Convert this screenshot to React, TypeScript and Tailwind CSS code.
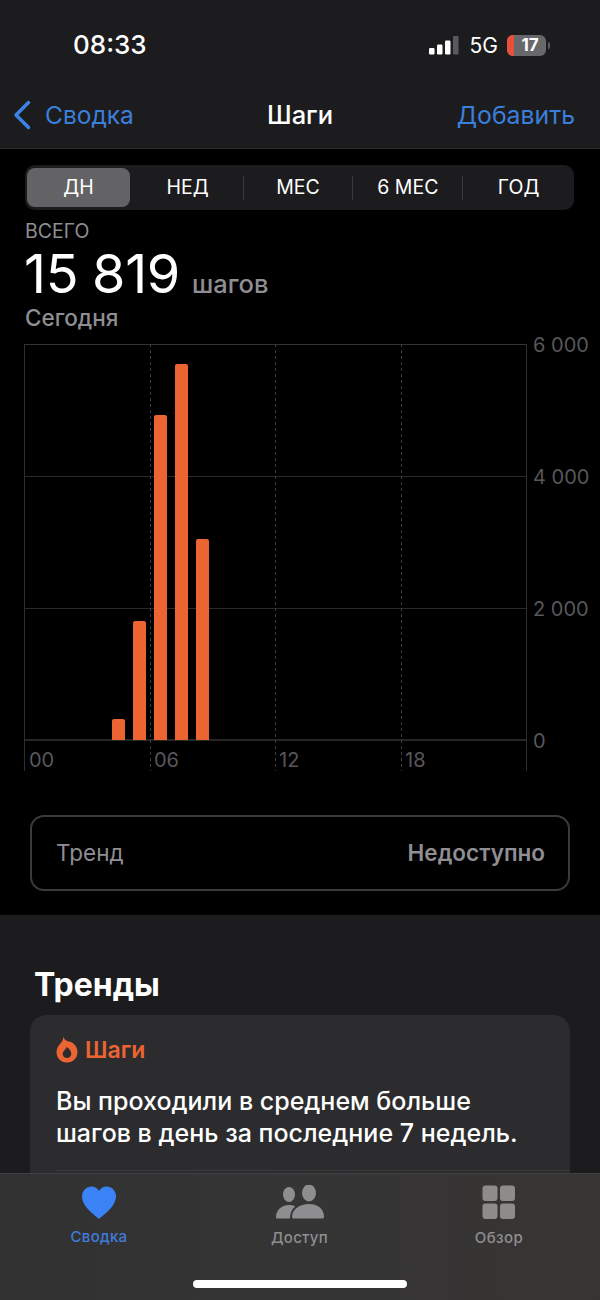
import React from 'react';

const tabs = [
  { label: 'НЕД', cls: 'w-[113px] pl-[3px]' },
  { label: 'МЕС', cls: 'w-[109px]' },
  { label: '6 МЕС', cls: 'w-[109px]' },
  { label: 'ГОД', cls: 'w-[109px] pl-[2px]' },
];

// x, top of each bar in the day chart (baseline is y=396 in chart coords)
const bars = [
  { x: 88, top: 375 },
  { x: 109, top: 277 },
  { x: 130, top: 71 },
  { x: 151, top: 20 },
  { x: 172, top: 195 },
];

const StepsChart = () => (
  <svg width="600" height="438" viewBox="0 -10 600 438" className="block">
    <g transform="translate(24 0)">
      <line x1="0.5" y1="0" x2="0.5" y2="427" stroke="#2e2e30" />
      <line x1="502.5" y1="0" x2="502.5" y2="427" stroke="#2e2e30" />
      <line x1="0" y1="0.5" x2="503" y2="0.5" stroke="#333335" />
      <line x1="0" y1="132.5" x2="503" y2="132.5" stroke="#2a2a2c" />
      <line x1="0" y1="264.5" x2="503" y2="264.5" stroke="#2a2a2c" />
      <line x1="0" y1="396" x2="503" y2="396" stroke="#333335" strokeWidth="1.5" />
      {[126.5, 251.5, 377.5].map((x) => (
        <line key={x} x1={x} y1="0" x2={x} y2="427" stroke="#3d3d3f" strokeDasharray="3 3" />
      ))}
      {bars.map((b) => (
        <path
          key={b.x}
          d={`M${b.x} 396V${b.top + 2}a2 2 0 0 1 2-2h9a2 2 0 0 1 2 2V396z`}
          fill="#ec6431"
        />
      ))}
    </g>
    <g fill="#57575a" fontSize="20" fontFamily="Inter, sans-serif">
      <text x="533" y="8">6 000</text>
      <text x="533" y="140">4 000</text>
      <text x="533" y="272">2 000</text>
      <text x="533" y="404">0</text>
      <text x="29" y="423">00</text>
      <text x="154" y="423">06</text>
      <text x="279" y="423">12</text>
      <text x="405" y="423">18</text>
    </g>
  </svg>
);

const Heart = () => (
  <svg width="36" height="36" viewBox="0 0 36 36">
    <path
      d="M18 34C15 31 1 22 1 11.500 1 5.500 5.500 1.500 10.500 1.500c3.500 0 6 1.800 7.500 4.500 1.500-2.700 4-4.500 7.500-4.500C30.500 1.500 35 5.500 35 11.500 35 22 21 31 18 34z"
      fill="#3b82f6"
    />
  </svg>
);

const People = () => (
  <svg width="48" height="34" viewBox="0 0 48 34" fill="#8e8e90">
    <ellipse cx="13" cy="9.500" rx="6" ry="7.500" />
    <ellipse cx="33" cy="8" rx="7" ry="8.500" />
    <path d="M0 32.500C0 25 5.500 20 13 20c2.300 0 4.400.5 6.200 1.400C15.800 24 14 28 14 33.500H1.500C.6 33.500 0 33.200 0 32.500z" />
    <path d="M17.500 33.500c-1 0-1.500-.6-1.500-1.400C16 24.500 23.500 19 33 19s15 5.500 15 13.100c0 .8-.5 1.400-1.500 1.400z" />
  </svg>
);

const Grid = () => (
  <svg width="34" height="34" viewBox="0 0 34 34" fill="#8f8b89">
    <rect x="0.500" y="0.500" width="15" height="15.500" rx="3" />
    <rect x="18" y="0.500" width="15" height="15.500" rx="3" />
    <rect x="0.500" y="18.500" width="15" height="15.500" rx="3" />
    <rect x="18" y="18.500" width="15" height="15.500" rx="3" />
  </svg>
);

const Flame = () => (
  <svg width="22" height="26" viewBox="0 0 22 26" className="shrink-0">
    <path
      fillRule="evenodd"
      fill="#ec6431"
      d="M7 0c.5 3-1 4.500-3 7C2 9.300 0.500 11.800 0.500 15c0 6 4.500 10.500 10.500 10.500S21.500 21 21.500 15c0-5-3.500-9.500-8.500-10.500-1.500-.3-3-1-4-2C8.300 1.800 7.700 1 7 0zM11 21c-2.500 0-4.300-1.800-4.300-4 0-1.500.8-2.700 2-4 .8-.9 1.500-2 1.800-3 2.600 1.300 4.800 4 4.800 7 0 2.300-1.800 4-4.300 4z"
    />
  </svg>
);

export default function App() {
  return (
    <div
      className="relative w-[600px] h-[1300px] overflow-hidden bg-[#1c1c1e] text-white"
      style={{ fontFamily: 'Inter, "Noto Sans", sans-serif' }}
    >
      {/* Status bar */}
      <div className="h-[88px] flex items-center justify-between pl-[73px] pr-[50px] pt-[2px]">
        <span className="text-[26px] leading-none font-medium">08:33</span>
        <div className="flex items-center">
          <svg width="30" height="20" viewBox="0 0 30 20">
            <rect x="0" y="13" width="5.500" height="6.500" rx="1.200" fill="#fff" />
            <rect x="8" y="9.500" width="5.500" height="10" rx="1.200" fill="#fff" />
            <rect x="16" y="5.500" width="5.500" height="14" rx="1.200" fill="#fff" />
            <rect x="24" y="1" width="5.500" height="18.500" rx="1.200" fill="#5a5a5c" />
          </svg>
          <span className="ml-[11px] text-[21px] leading-none font-normal">5G</span>
          <div className="ml-[9px] w-[39px] h-[21px] rounded-[6px] bg-[#68686a] overflow-hidden flex items-center">
            <div className="w-[7px] h-full bg-[#e8503a] shrink-0" />
            <span className="flex-1 text-center text-[17px] leading-none font-bold">17</span>
          </div>
          <div className="ml-[2px] w-[2px] h-[7px] rounded-r bg-[#5a5a5c]" />
        </div>
      </div>

      {/* Nav bar */}
      <div className="relative h-[61px] flex items-center justify-between pl-[12px] pr-[25px] pb-[6px] border-b border-[#2a2a2c]">
        <div className="flex items-center">
          <svg width="20" height="30" viewBox="0 0 20 30">
            <path d="M16.500 2.500 4 15l12.500 12.500" fill="none" stroke="#3b82e6" strokeWidth="3.500" strokeLinecap="round" strokeLinejoin="round" />
          </svg>
          <span className="ml-[13px] text-[24.500px] leading-none text-[#3b7fdc]">Сводка</span>
        </div>
        <span className="absolute left-0 right-0 text-center text-[25.500px] leading-none font-medium">Шаги</span>
        <span className="text-[24.800px] leading-none text-[#3b7fdc]">Добавить</span>
      </div>

      {/* Steps panel */}
      <div className="h-[766px] bg-black pt-[16px]">
        <div className="mx-[25px] w-[549px] h-[45px] rounded-[10px] bg-[#1c1c1e] flex items-center p-[2px] text-[19.500px]">
          <div className="w-[103px] h-[39px] rounded-[8px] bg-[#636366] flex items-center justify-center">
            ДН
          </div>
          {tabs.map((t, i) => (
            <React.Fragment key={t.label}>
              {i > 0 && <div className="w-px h-[24px] bg-[#3a3a3c]" />}
              <div className={`${t.cls} h-[39px] flex items-center justify-center`}>{t.label}</div>
            </React.Fragment>
          ))}
        </div>

        <div className="pl-[25px] mt-[10px] text-[19.500px] leading-[22px] text-[#8e8e93]">ВСЕГО</div>
        <div className="pl-[24px] mt-[7px] flex items-baseline h-[50px]">
          <span className="text-[54px] leading-[50px] font-normal tracking-[-0.3px] [word-spacing:-1px]">15 819</span>
          <span className="ml-[12px] text-[25.500px] leading-[30px] font-medium text-[#8e8e93]">шагов</span>
        </div>
        <div className="pl-[25px] mt-[6px] text-[22.500px] leading-[26px] font-medium text-[#8e8e93]">Сегодня</div>

        <div className="mt-[3px]">
          <StepsChart />
        </div>

        <div className="mx-[30px] mt-[43px] w-[540px] h-[76px] rounded-[14px] border-2 border-[#3a3a3c] flex items-center justify-between pl-[24px] pr-[23px]">
          <span className="text-[22.500px] text-[#8e8e93]">Тренд</span>
          <span className="text-[22.500px] font-semibold text-[#8e8e93]">Недоступно</span>
        </div>
      </div>

      {/* Trends */}
      <div className="px-[30px]">
        <h2 className="pl-[4px] mt-[50px] text-[32px] leading-[40px] font-bold">Тренды</h2>
        <div className="mt-[10px] h-[200px] rounded-[16px] bg-[#2c2c2e] pl-[26px] pt-[20px]">
          <div className="flex items-center gap-[7px] h-[30px]">
            <Flame />
            <span className="text-[23px] font-semibold text-[#ec6431]">Шаги</span>
          </div>
          <p className="mt-[20px] text-[25px] leading-[32px] font-medium">
            Вы проходили в среднем больше
            <br />
            шагов в день за последние 7 недель.
          </p>
          <div className="mt-[21px] h-px bg-[#3a3a3c]" />
        </div>
      </div>

      {/* Tab bar */}
      <div className="absolute bottom-0 left-0 right-0 h-[127px] bg-gradient-to-r from-[#313132] via-[#353535] to-[#383433] border-t border-[#414143]">
        <div className="flex justify-between pl-[70px] pr-[76px] pt-[11px]">
          <div className="flex flex-col items-center w-[58px]">
            <Heart />
            <span className="mt-[7px] text-[15px] leading-[18px] tracking-[0.3px] font-medium text-[#3f7bdd]">Сводка</span>
          </div>
          <div className="flex flex-col items-center w-[58px] mr-[3px]">
            <People />
            <span className="mt-[10px] text-[15px] leading-[18px] tracking-[0.3px] font-medium text-[#8e8e90]">Доступ</span>
          </div>
          <div className="flex flex-col items-center w-[50px]">
            <Grid />
            <span className="mt-[10px] text-[15px] leading-[18px] tracking-[0.4px] font-medium text-[#8e8e90]">Обзор</span>
          </div>
        </div>
        <div className="absolute left-[193px] bottom-[12px] w-[214px] h-[8px] rounded-full bg-white" />
      </div>
    </div>
  );
}
